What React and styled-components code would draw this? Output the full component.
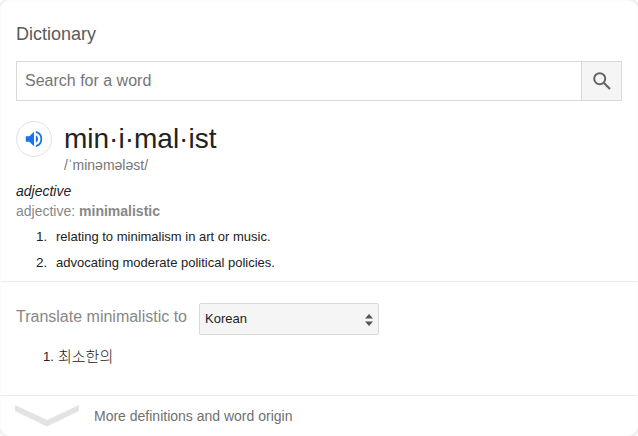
import React from 'react';
import styled, { createGlobalStyle } from 'styled-components';

const GlobalStyle = createGlobalStyle`
  * { box-sizing: border-box; }
  body { margin: 0; background: #fff; font-family: "Liberation Sans", Arial, "Noto Sans CJK KR", sans-serif; }
`;

const Card = styled.main`
  width: 638px;
  height: 436px;
  border: 1px solid #fcfcfc;
  border-radius: 10px;
  box-shadow: 0 0 0 2px #f0f0f0;
  background: #fff;
  overflow: hidden;
  display: flex;
  flex-direction: column;
`;

const Entry = styled.section`
  height: 281px;
  flex: none;
  padding: 22px 15px 0;
  border-bottom: 1px solid #ebebeb;
  box-sizing: content-box;
  height: 258px;
`;

const Title = styled.h1`
  margin: 0 0 16px;
  font-size: 18px;
  font-weight: 400;
  line-height: 22px;
  color: #5a5a5a;
`;

const SearchBar = styled.form`
  display: flex;
  width: 606px;
  height: 40px;
  border: 1px solid #d9d9d9;
`;

const SearchInput = styled.input`
  flex: 1;
  min-width: 0;
  border: 0;
  outline: 0;
  padding: 0 8px;
  font: 16px "Liberation Sans", Arial, sans-serif;
  &::placeholder { color: #757575; opacity: 1; }
`;

const SearchButton = styled.button`
  display: grid;
  place-items: center;
  width: 40px;
  padding: 0;
  border: 0;
  border-left: 1px solid #d9d9d9;
  background: #f5f5f5;
`;

const Headword = styled.div`
  display: flex;
  gap: 12px;
  margin-top: 20px;
  height: 60px;
`;

const SpeakButton = styled.button`
  display: grid;
  place-items: center;
  width: 36px;
  height: 36px;
  padding: 0;
  border: 1px solid #e0e1e8;
  border-radius: 50%;
  background: #fff;
`;

const Word = styled.h2`
  margin: 0;
  font-size: 28px;
  font-weight: 400;
  line-height: 36px;
  color: #222;
`;

const Phonetic = styled.div`
  font-size: 14px;
  line-height: 16px;
  color: #777;
`;

const Grammar = styled.p`
  margin: 0;
  font-size: 14px;
  line-height: 20px;
  font-style: ${(p) => (p.$italic ? 'italic' : 'normal')};
  color: ${(p) => (p.$italic ? '#222' : '#878787')};
`;

const Definitions = styled.ol`
  margin: 3px 0 0;
  padding: 0 0 0 20px;
  list-style: none;
`;

const Definition = styled.li`
  display: flex;
  height: 26px;
  line-height: 26px;
  font-size: 13px;
  color: #222;
`;

const Marker = styled.span`
  width: ${(p) => p.$width};
  font-size: ${(p) => p.$size};
`;

const Translation = styled.section`
  flex: none;
  height: 114px;
  padding: 21px 15px 0;
  border-bottom: 1px solid #ebebeb;
`;

const LanguageRow = styled.div`
  display: flex;
  gap: 12px;
  height: 32px;
`;

const Prompt = styled.label`
  width: 171px;
  font-size: 16px;
  line-height: 27px;
  white-space: nowrap;
  color: #878787;
`;

const Picker = styled.button`
  display: flex;
  align-items: center;
  justify-content: space-between;
  width: 180px;
  height: 32px;
  padding: 0 5px 2px;
  border: 1px solid #d9d9d9;
  border-radius: 2px;
  background: #f5f5f5;
  font: 13px "Liberation Sans", Arial, sans-serif;
  color: #222;
`;

const Result = styled.div`
  display: flex;
  align-items: center;
  height: 24px;
  margin: 9px 0 0 27px;
  color: #222;
`;

const Korean = styled.span`
  font-family: "Noto Sans CJK KR", sans-serif;
  font-weight: 300;
  font-size: 15px;
  line-height: 24px;
`;

const More = styled.footer`
  display: flex;
  flex: none;
  align-items: center;
  gap: 15px;
  height: 40px;
  padding: 0 14px;
  font-size: 14px;
  color: #707070;
`;

const ArrowIcon = styled.svg`
  margin-top: 3px;
`;

function SearchIcon() {
  return (
    <svg width="24" height="24" viewBox="0 0 24 24" fill="none" stroke="#666">
      <circle cx="9.700" cy="9.700" r="5.500" strokeWidth="2" />
      <path d="M13.700 13.700l6.300 6.300" strokeWidth="2.200" />
    </svg>
  );
}

function SpeakerIcon() {
  return (
    <svg width="22" height="22" viewBox="0 0 24 24" fill="#1a73e8">
      <path d="M3 9v6h4l5 5V4L7 9H3zm13.500 3A4.500 4.500 0 0 0 14 7.970v8.050A4.470 4.470 0 0 0 16.500 12zM14 3.230v2.060a7 7 0 0 1 0 13.420v2.060a9 9 0 0 0 0-17.540z" />
    </svg>
  );
}

function SortArrows() {
  return (
    <ArrowIcon width="8" height="12" viewBox="0 0 8 12" fill="#555">
      <path d="M4 0l4 4.600H0zM4 12l4-4.600H0z" />
    </ArrowIcon>
  );
}

function Chevron() {
  return (
    <svg width="64" height="22" viewBox="0 0 64 22" fill="#e3e3e3">
      <path d="M0 0l32 15L64 0v6L32 21.500L0 6z" />
    </svg>
  );
}

const meanings = ['relating to minimalism in art or music.', 'advocating moderate political policies.'];

export default function App() {
  return (
    <>
      <GlobalStyle />
      <Card>
        <Entry>
          <Title>Dictionary</Title>
          <SearchBar>
            <SearchInput placeholder="Search for a word" />
            <SearchButton type="button" aria-label="Search"><SearchIcon /></SearchButton>
          </SearchBar>
          <Headword>
            <SpeakButton aria-label="Listen"><SpeakerIcon /></SpeakButton>
            <div>
              <Word>min·i·mal·ist</Word>
              <Phonetic>/ˈminəmələst/</Phonetic>
            </div>
          </Headword>
          <Grammar $italic>adjective</Grammar>
          <Grammar>adjective: <b>minimalistic</b></Grammar>
          <Definitions>
            {meanings.map((text, i) => (
              <Definition key={text}>
                <Marker $width="20px" $size="13.500px">{i + 1}.</Marker>
                {text}
              </Definition>
            ))}
          </Definitions>
        </Entry>
        <Translation>
          <LanguageRow>
            <Prompt>Translate minimalistic to</Prompt>
            <Picker>Korean<SortArrows /></Picker>
          </LanguageRow>
          <Result>
            <Marker $width="15px" $size="13px">1.</Marker>
            <Korean>최소한의</Korean>
          </Result>
        </Translation>
        <More><Chevron />More definitions and word origin</More>
      </Card>
    </>
  );
}
